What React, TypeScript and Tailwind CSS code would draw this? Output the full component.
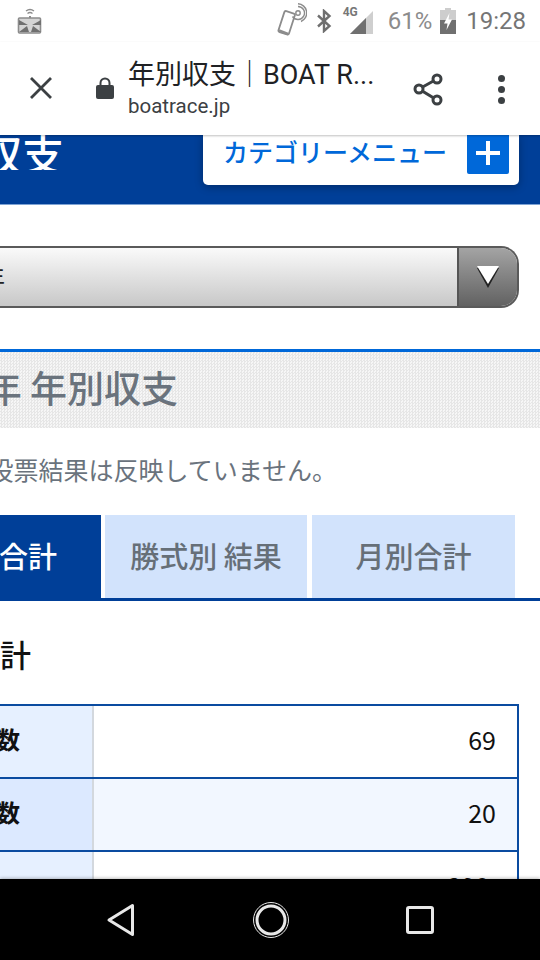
import React from "react";

const JP = "font-['Noto_Sans_CJK_JP',sans-serif]";

function StatusBar() {
  return (
    <div className="h-[42px] shrink-0 flex items-center pl-[17px] pr-[14px] bg-white">
      <svg width="26" height="28" viewBox="0 0 26 28" className="mt-[-2px]">
        <path d="M9 5 Q13 2 17 5 M10.5 7.5 Q13 5.5 15.5 7.5" stroke="#8c8c8c" strokeWidth="1.4" fill="none" />
        <path d="M12 10h2v2h-2z" fill="#8c8c8c" />
        <rect x="1.5" y="12" width="22" height="15" rx="1" fill="#d4d4d4" stroke="#8c8c8c" strokeWidth="1.6" />
        <path d="M2 14 L11 19 L2 19 Z M24 14 L15 19 L24 19 Z M2 26 L10 20 L12 26 Z M24 26 L16 20 L14 26Z" fill="#707070" />
      </svg>
      <div className="ml-auto flex items-center">
        <svg width="30" height="36" viewBox="0 0 30 36" className="mt-[-1px]">
          <g transform="rotate(18 10 22)" fill="none" stroke="#8c8c8c" strokeWidth="1.8">
            <rect x="3.5" y="9" width="11" height="22" rx="1.6" />
          </g>
          <path d="M2 27.5 L11 31" stroke="#8c8c8c" strokeWidth="2.5" />
          <circle cx="21" cy="10" r="2.2" fill="none" stroke="#8c8c8c" strokeWidth="1.4" />
          <path d="M21 3.5 A6.5 6.5 0 1 1 15.5 13.5 M21 0.8 A9.2 9.2 0 0 1 24 18.5" fill="none" stroke="#8c8c8c" strokeWidth="1.4" />
        </svg>
        <svg width="16" height="24" viewBox="0 0 16 24" className="ml-[9px]">
          <path d="M2 6.5 L13.5 17 L8 22 L8 2 L13.5 7 L2 17.5" fill="none" stroke="#6f6f6f" strokeWidth="2.4" />
        </svg>
        <div className="ml-[11px] relative w-[31px] h-[24px] mt-[2px]">
          <span className="absolute left-0 top-[-4px] text-[12px] font-bold leading-[12px] text-[#777] font-['Roboto',sans-serif]">4G</span>
          <svg width="24" height="24" viewBox="0 0 24 24" className="absolute right-0 top-0">
            <path d="M0 24 L23 1 L23 24 Z" fill="#cfcfcf" />
            <path d="M0 24 L16 8 L16 24 Z" fill="#707070" />
          </svg>
        </div>
        <span className="ml-[14px] text-[24px] leading-[28px] text-[#8c8c8c] font-['Roboto',sans-serif]">61%</span>
        <svg width="16" height="26" viewBox="0 0 16 26" className="ml-[8px]">
          <path d="M5 0h6v2h5v24H0V2h5z" fill="#cdcdcd" />
          <path d="M0 12h16v14H0z" fill="#707070" />
          <path d="M9.5 5 L4 15.5 H7.5 L6.5 22 L12 11.5 H8.5 Z" fill="#fff" />
        </svg>
        <span className="ml-[10px] text-[24px] leading-[28px] text-[#757575] font-['Roboto',sans-serif]">19:28</span>
      </div>
    </div>
  );
}

function Toolbar() {
  return (
    <div className="h-[93px] shrink-0 flex items-center bg-white relative z-10 shadow-[0_1px_2px_rgba(0,0,0,0.25)]">
      <svg width="24" height="24" viewBox="0 0 24 24" className="ml-[29px] mt-[-1px]">
        <path d="M2 2 L22 22 M22 2 L2 22" stroke="#3c4043" strokeWidth="2.8" fill="none" />
      </svg>
      <svg width="20" height="24" viewBox="0 0 20 24" className="ml-[42px] mt-[-1px] mr-[13px]">
        <path d="M5.5 10 V7 a4.5 4.5 0 0 1 9 0 V10" fill="none" stroke="#3c4043" strokeWidth="2" />
        <rect x="1" y="9" width="18" height="14" rx="2" fill="#3c4043" />
      </svg>
      <div className="w-[250px] mt-[-3px]">
        <div className="font-['Roboto','Noto_Sans_CJK_JP',sans-serif] text-[27px] leading-[36px] text-[#202124] whitespace-nowrap">年別収支<span className="font-['Noto_Sans_CJK_JP',sans-serif]">｜</span>BOAT R...</div>
        <div className="font-['Roboto',sans-serif] text-[20.5px] leading-[25px] mt-[1px] text-[#3c4043]">boatrace.jp</div>
      </div>
      <svg width="36" height="36" viewBox="0 0 36 36" className="ml-[32px] mt-[1px]">
        <path d="M27 8 L9 18 L27 29" stroke="#3c4043" strokeWidth="3" fill="none" />
        <circle cx="27" cy="8" r="4" fill="#fff" stroke="#3c4043" strokeWidth="3" />
        <circle cx="9" cy="18" r="4" fill="#fff" stroke="#3c4043" strokeWidth="3" />
        <circle cx="27" cy="29" r="4" fill="#fff" stroke="#3c4043" strokeWidth="3" />
      </svg>
      <div className="ml-[52px] flex flex-col gap-[4px] mt-[1px]">
        <span className="w-[7px] h-[7px] rounded-full bg-[#3c4043]" />
        <span className="w-[7px] h-[7px] rounded-full bg-[#3c4043]" />
        <span className="w-[7px] h-[7px] rounded-full bg-[#3c4043]" />
      </div>
    </div>
  );
}

function Row({ label, value, even }: { label: string; value: string; even?: boolean }) {
  return (
    <div className="flex h-[73px] border-b-2 border-[#0a4ba0] shrink-0">
      <div className={`w-[94px] shrink-0 border-r-2 border-[#d3d8de] pb-[5px] flex items-center justify-end overflow-hidden ${even ? "bg-[#dce9ff]" : "bg-[#e6f0ff]"}`}>
        <span className="text-[24px] font-bold text-[#111] whitespace-nowrap pr-[72px]">{label}</span>
      </div>
      <div className={`flex-1 flex items-center justify-end pr-[21px] pb-[3px] text-[25px] text-[#111] ${even ? "bg-[#f2f7ff]" : "bg-white"}`}>
        {value}
      </div>
    </div>
  );
}

export default function App() {
  return (
    <div className={`w-[540px] h-[960px] overflow-hidden flex flex-col bg-white ${JP}`}>
      <StatusBar />
      <Toolbar />
      <main className="flex-1 min-h-0 overflow-hidden flex flex-col">
        <header className="h-[70px] shrink-0 bg-[#003f98] border-b border-[#7ea3d4] flex items-start overflow-hidden">
          <div className="w-[64px] shrink-0 flex justify-end overflow-hidden">
            <span className="text-[42px] leading-[35px] font-medium text-white whitespace-nowrap">年別収支</span>
          </div>
          <div className="ml-[139px] w-[316px] h-[50px] bg-white rounded-b-[5px] flex items-start shadow-[0_2px_8px_rgba(0,0,0,0.3)]">
            <span className="ml-[20px] mt-[-2px] text-[25px] leading-[36px] font-medium text-[#0068d9] whitespace-nowrap">カテゴリーメニュー</span>
            <div className="ml-[20px] w-[42px] h-[39px] pb-[3px] bg-[#0068d9] rounded-b-[2px] flex items-center justify-center">
              <svg width="26" height="26" viewBox="0 0 26 26">
                <path d="M13 1V25M1 13H25" stroke="#fff" strokeWidth="4" />
              </svg>
            </div>
          </div>
        </header>

        <div className="shrink-0 mt-[41px] w-[519px] h-[62px] flex rounded-r-[18px] border-2 border-l-0 border-[#5a5a5a] overflow-hidden">
          <div className="flex-1 bg-gradient-to-b from-[#fafafa] to-[#c8c8c8] flex items-center justify-end overflow-hidden pr-[452px]">
            <span className="text-[24px] text-[#222] whitespace-nowrap">2019年</span>
          </div>
          <div className="w-[60px] shrink-0 border-l-2 border-[#555] bg-gradient-to-b from-[#a4a4a4] to-[#626262] flex items-center justify-center">
            <svg width="26" height="26" viewBox="0 0 26 26">
              <path d="M2 4H24L13 24Z" fill="#222" />
              <path d="M2 2H24L13 20Z" fill="#fff" />
            </svg>
          </div>
        </div>

        <div className="shrink-0 mt-[41px] h-[79px] border-t-[3px] border-[#0068d9] pb-[4px] bg-[repeating-conic-gradient(#e6e6e6_0_25%,#f6f6f6_0_50%)] bg-[length:3px_3px] flex items-center justify-end pr-[362px] overflow-hidden">
          <span className="text-[37px] font-medium text-[#6a737d] whitespace-nowrap">2019年 年別収支</span>
        </div>

        <div className="shrink-0 mt-[25px] h-[34px] flex items-center justify-end pr-[203px] overflow-hidden">
          <span className="text-[25px] text-[#6a737d] whitespace-nowrap">※当日の投票結果は反映していません。</span>
        </div>

        <div className="shrink-0 mt-[28px] h-[86px] border-b-[3px] border-[#003f98] flex items-stretch">
          <div className="w-[101px] shrink-0 bg-[#003f98] pb-[2px] flex items-center justify-end pr-[44px] overflow-hidden">
            <span className="text-[29px] font-medium text-white whitespace-nowrap">年間合計</span>
          </div>
          <div className="ml-[4px] w-[202px] pb-[2px] bg-[#d2e3fc] flex items-center justify-center text-[29px] font-medium text-[#666f78] whitespace-nowrap">勝式別 結果</div>
          <div className="ml-[5px] w-[203px] pb-[2px] bg-[#d2e3fc] flex items-center justify-center text-[29px] font-medium text-[#666f78] whitespace-nowrap">月別合計</div>
        </div>

        <div className="shrink-0 mt-[31px] h-[44px] w-[31px] flex items-center justify-end overflow-hidden">
          <span className="text-[31px] font-medium text-[#111] whitespace-nowrap">年間合計</span>
        </div>

        <div className="shrink-0 mt-[28px] w-[519px] border-t-2 border-r-2 border-[#0a4ba0] flex flex-col">
          <Row label="レース数" value="69" />
          <Row label="的中数" value="20" even />
          <Row label="" value="290." />
        </div>
      </main>
      <nav className="h-[81px] shrink-0 bg-black relative z-10 shadow-[0_-1px_3px_rgba(0,0,0,0.25)] flex items-center justify-center gap-[116px]">
        <svg width="30" height="34" viewBox="0 0 30 34">
          <path d="M26.5 2.5 V31.5 L3 17 Z" fill="none" stroke="#e8e8e8" strokeWidth="3" strokeLinejoin="round" />
        </svg>
        <svg width="38" height="38" viewBox="0 0 38 38">
          <circle cx="19" cy="19" r="17.5" fill="none" stroke="#e8e8e8" strokeWidth="1" />
          <circle cx="19" cy="19" r="14" fill="none" stroke="#e8e8e8" strokeWidth="3" />
        </svg>
        <svg width="28" height="28" viewBox="0 0 28 28">
          <rect x="1.5" y="1.5" width="25" height="25" rx="1.5" fill="none" stroke="#e8e8e8" strokeWidth="3" />
        </svg>
      </nav>
    </div>
  );
}
